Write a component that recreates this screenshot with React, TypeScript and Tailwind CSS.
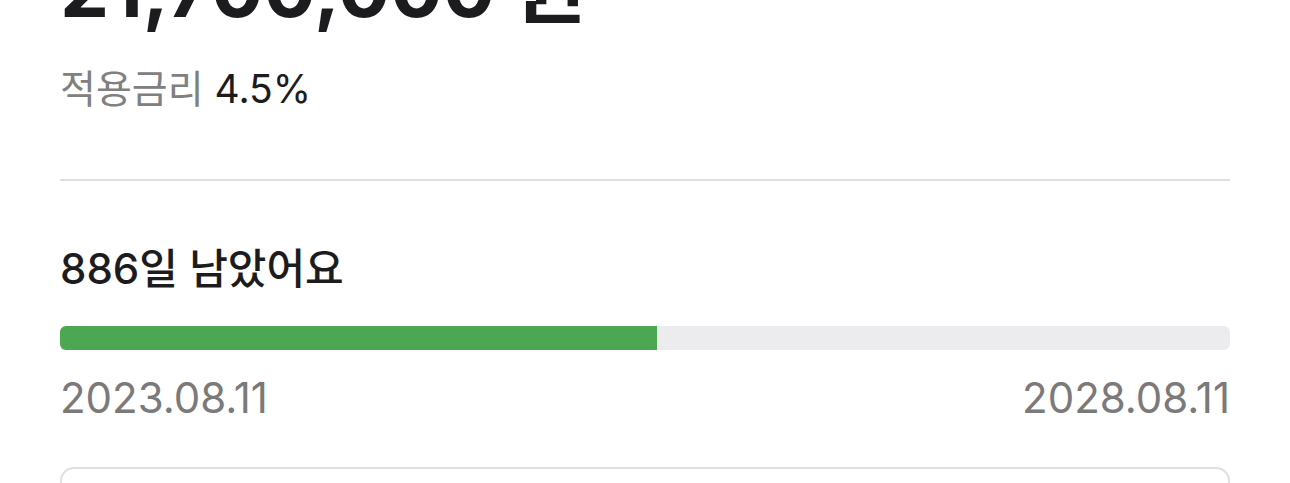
const FONT = "font-['Inter','Noto_Sans_CJK_KR',sans-serif]";

const START = "2023.08.11";
const END = "2028.08.11";
const PROGRESS = 51;

export default function App() {
  return (
    <div className={`${FONT} w-[1290px] h-[483px] overflow-hidden bg-white px-[60px] text-[#1c1c1e]`}>
      {/* amount */}
      <p className="mt-[-50px] text-[78px] leading-[78px] font-bold">21,700,000 원</p>

      {/* rate */}
      <p className="mt-[41px] text-[39px] leading-[39px]">
        <span className="text-[#808080]">적용금리</span> <span>4.5%</span>
      </p>

      <div className="mt-[71px] h-[2px] bg-[#dedede]" />

      {/* remaining days */}
      <p className="mt-[67px] text-[42px] leading-[42px] font-medium">886일 남았어요</p>

      <div className="mt-[36px] h-[24px] rounded-[6px] bg-[#ececef] overflow-hidden">
        <div className="h-full bg-[#4ba752]" style={{ width: `${PROGRESS}%` }} />
      </div>

      <div className="mt-[27px] flex justify-between text-[42px] leading-[42px] text-[#7a7a7a]">
        <span>{START}</span>
        <span>{END}</span>
      </div>

      <div className="mt-[48px] h-[200px] rounded-[14px] border-2 border-[#e0e0e0]" />
    </div>
  );
}
